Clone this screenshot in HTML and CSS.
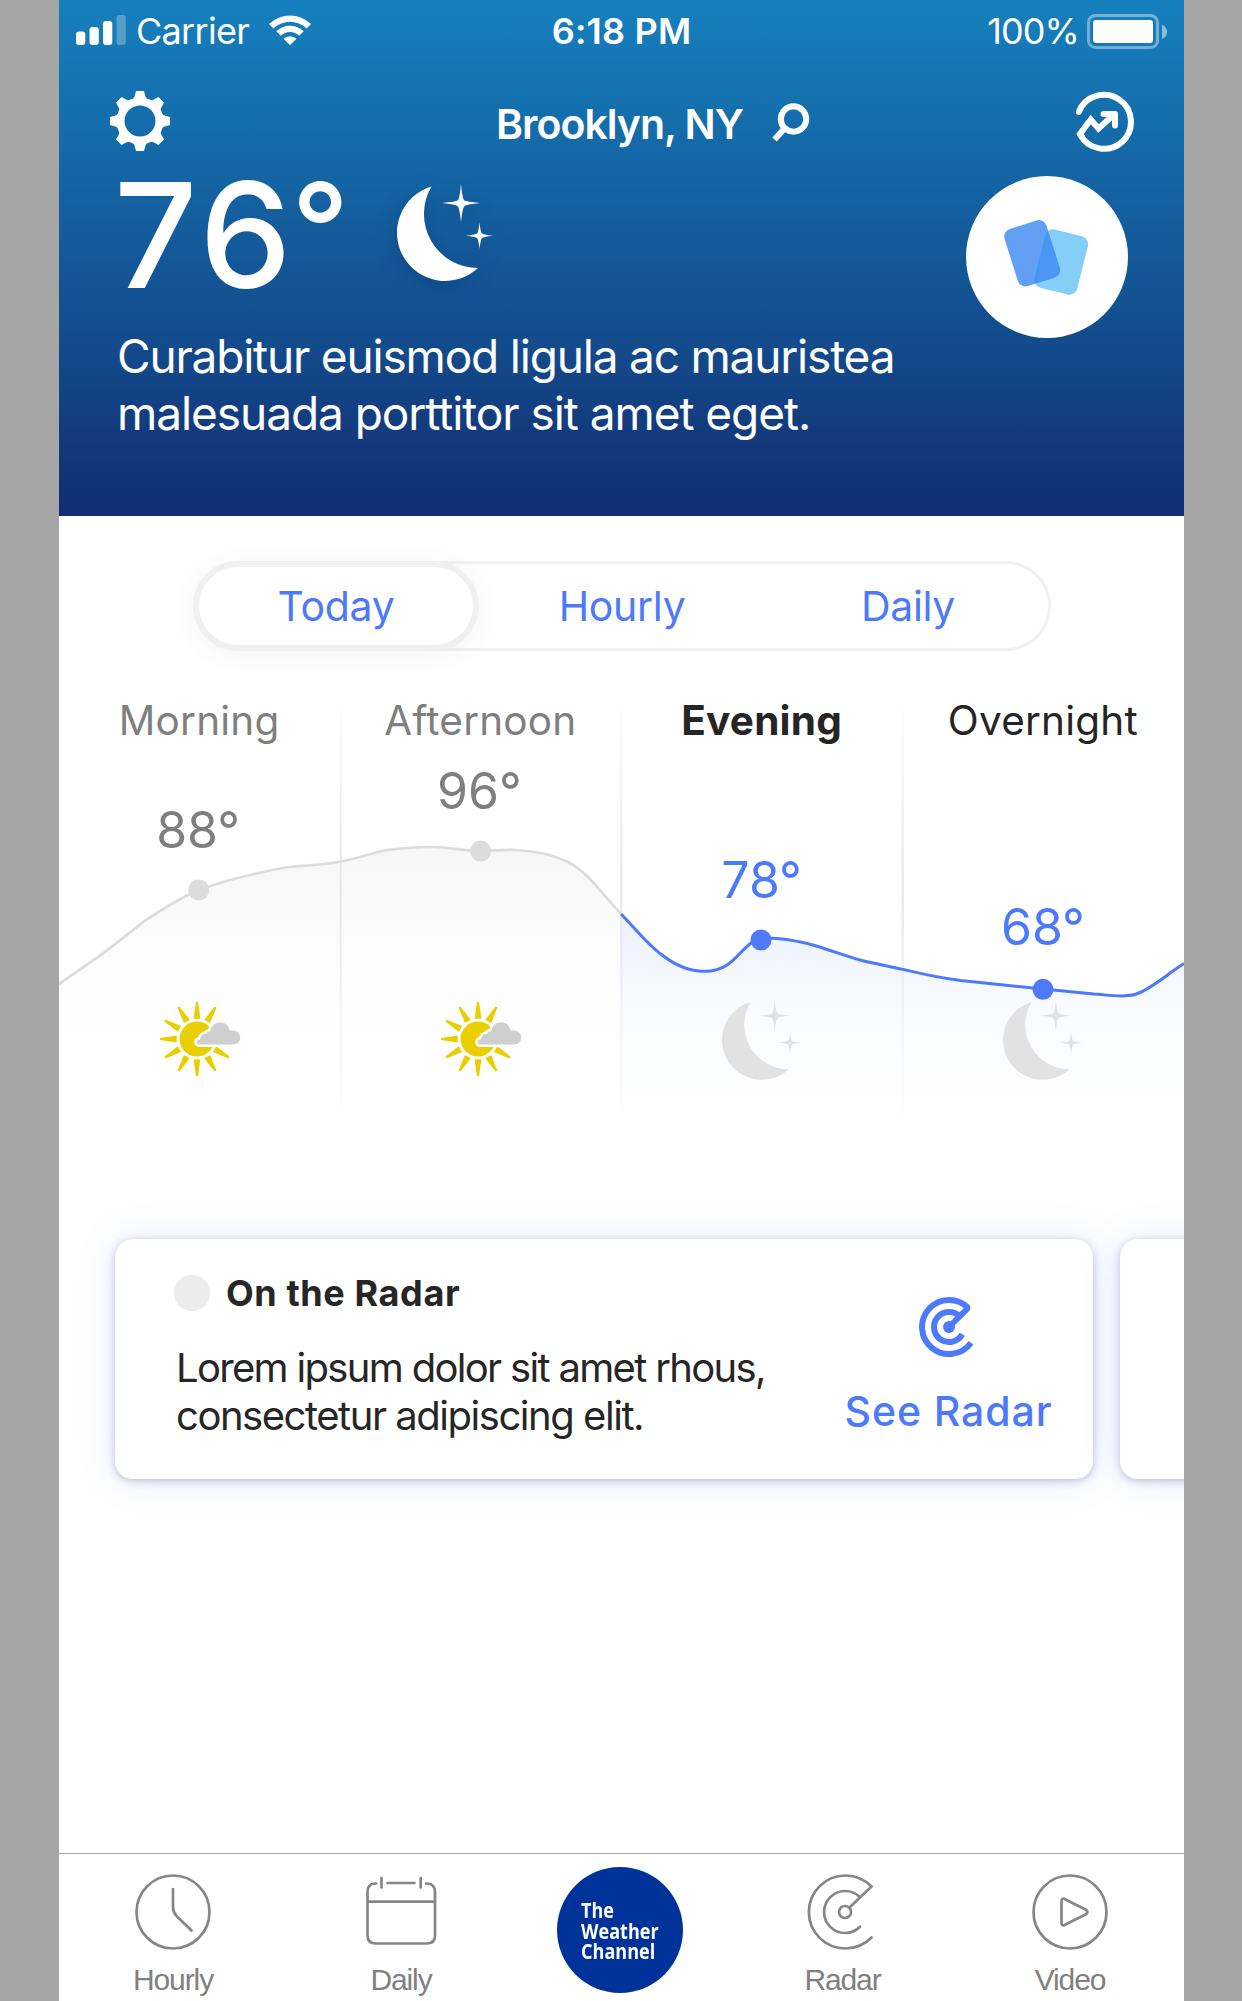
FILE: index.html
```html
<!DOCTYPE html>
<html lang="en">
<head>
<meta charset="utf-8">
<title>Weather</title>
<link rel="stylesheet" href="styles.css">
</head>
<body>
<svg class="defs" width="0" height="0" aria-hidden="true">
  <defs>
    <symbol id="moon" viewBox="397 183 97 98">
      <path d="M431.5 186.5A48.2 48.2 0 1 0 478 268A54 54 0 0 1 431.5 186.5Z"/>
      <path d="M461 184Q462.500 200 464.500 200.500Q466 201.500 480 203Q466 204.500 464.500 206Q462.500 207.500 461 222Q459.500 207.500 457.500 206Q456 204.500 442 203Q456 201.500 457.500 200.500Q459.500 200 461 184Z"/>
      <path d="M479.500 222.500Q480.700 233 482 233.500Q483 234.500 493 235.800Q483 237 482 238Q480.700 239 479.500 249Q478.300 239 477 238Q476 237 466 235.800Q476 234.500 477 233.500Q478.300 233 479.500 222.500Z"/>
    </symbol>
    <symbol id="sun" viewBox="0 0 82 74">
      <g fill="#e9cf00">
        <circle cx="38" cy="37" r="17.500"/>
        <g id="rays">
          <path id="ray" d="M36.900 0H39.100L41.400 16.700H34.600Z"/>
          <use href="#ray" transform="rotate(30 38 37)"/>
          <use href="#ray" transform="rotate(120 38 37)"/>
          <use href="#ray" transform="rotate(150 38 37)"/>
          <use href="#ray" transform="rotate(180 38 37)"/>
          <use href="#ray" transform="rotate(210 38 37)"/>
          <use href="#ray" transform="rotate(240 38 37)"/>
          <use href="#ray" transform="rotate(270 38 37)"/>
          <use href="#ray" transform="rotate(300 38 37)"/>
          <use href="#ray" transform="rotate(330 38 37)"/>
        </g>
      </g>
      <path d="M40 42.500C36.500 42 37 37.500 41 37.500C41.500 33.500 44 31.500 47 32C47.500 30 49 29.500 51 29.500C54 17.500 68.500 17.500 70.500 28.500C83.500 26 84.500 42.500 74.500 42.500Z" fill="#cfcfcf" stroke="#fff" stroke-width="5" paint-order="stroke"/>
    </symbol>
  </defs>
</svg>

<main class="phone">
  <header class="hero">
    <div class="status">
      <div class="status-left">
        <svg width="51" height="30" viewBox="0 0 51 30" fill="#fff"><rect x="0" y="16.500" width="9.300" height="13.500" rx="3"/><rect x="13.500" y="12" width="9.300" height="18" rx="3"/><rect x="27" y="6" width="9.300" height="24" rx="3"/><rect x="40.500" y="0" width="9.300" height="30" rx="3" opacity=".27"/></svg>
        <span class="carrier">Carrier</span>
        <svg class="wifi" width="42" height="30" viewBox="0 0 42 30" fill="#fff"><path d="M0 9A30 30 0 0 1 42 9L37.500 13.500A23.500 23.500 0 0 0 4.500 13.500Z"/><path d="M7.300 16.300A19.500 19.500 0 0 1 34.700 16.300L30.200 20.800A13 13 0 0 0 11.800 20.800Z"/><path d="M14.500 23.700A9.500 9.500 0 0 1 27.500 23.700L21 30.200Z"/></svg>
      </div>
      <div class="time">6:18 PM</div>
      <div class="status-right">
        <span class="percent">100%</span>
        <svg width="80" height="35" viewBox="0 0 80 35"><rect x="1.500" y="1.500" width="69" height="32" rx="7" fill="none" stroke="#fff" stroke-width="3" opacity=".4"/><rect x="6" y="6" width="60" height="23" rx="3" fill="#fff"/><path d="M75 10.500Q80 13 80 18T75 25Z" fill="#fff" opacity=".5"/></svg>
      </div>
    </div>

    <nav class="topbar">
      <svg class="gear" width="60" height="60" viewBox="-30 -30 60 60">
        <path fill="none" stroke="#fff" stroke-width="8" d="M0-19.500A19.500 19.500 0 1 1 0 19.500A19.500 19.500 0 1 1 0-19.500Z"/>
        <g fill="#fff"><path id="tooth" d="M-4-30H4L5.500-24.500Q6.500-21.500 11-20L0-17L-11-20Q-6.500-21.500-5.500-24.500Z"/><use href="#tooth" transform="rotate(45)"/><use href="#tooth" transform="rotate(90)"/><use href="#tooth" transform="rotate(135)"/><use href="#tooth" transform="rotate(180)"/><use href="#tooth" transform="rotate(225)"/><use href="#tooth" transform="rotate(270)"/><use href="#tooth" transform="rotate(315)"/></g>
      </svg>
      <div class="place">
        <span class="city">Brooklyn, NY</span>
        <svg class="search" width="38" height="40" viewBox="0 0 38 40" fill="none" stroke="#fff" stroke-width="6"><circle cx="21.500" cy="16" r="12.700"/><path d="M12.500 25.500L2.500 36.500"/></svg>
      </div>
      <svg class="trend" width="60" height="62" viewBox="0 0 60 62" fill="none" stroke="#fff" stroke-width="6"><path stroke-linecap="round" d="M4.800 22A27 27 0 1 1 6.200 44.600"/><path d="M8.500 47.500L6 44L16.700 29.500L24.500 38.500L40 24.500"/><path stroke-linecap="round" stroke-linejoin="round" d="M29.500 24H41V35.500"/></svg>
    </nav>

    <div class="current">
      <div class="now">
        <div class="reading">
          <span class="degrees"><span class="tens">7</span>6<span class="ring">°</span></span>
          <svg class="moon-now" width="97" height="98" fill="#fff"><use href="#moon"/></svg>
        </div>
        <p class="summary"><span class="line-a">Curabitur euismod ligula ac mauristea</span><br><span class="line-b">malesuada porttitor sit amet eget.</span></p>
      </div>
      <div class="badge">
        <svg width="86" height="78" viewBox="0 0 86 78"><g transform="rotate(14 57.200 44)"><rect x="35.200" y="14" width="44" height="60" rx="8" fill="#85cef7"/></g><g transform="rotate(-17.500 28.200 35.300)"><rect x="6.200" y="5.300" width="44" height="60" rx="8" fill="#3a88f2" opacity=".8"/></g></svg>
      </div>
    </div>
  </header>

  <div class="segments">
    <div class="segment selected">Today</div>
    <div class="segment">Hourly</div>
    <div class="segment">Daily</div>
  </div>

  <section class="forecast">
    <svg class="curve" width="1125" height="440" viewBox="59 690 1125 440">
      <defs>
        <linearGradient id="past" gradientUnits="userSpaceOnUse" x1="0" y1="845" x2="0" y2="1050"><stop offset="0" stop-color="#f7f7f7"/><stop offset=".5" stop-color="#fcfcfc"/><stop offset="1" stop-color="#fff"/></linearGradient>
        <linearGradient id="next" gradientUnits="userSpaceOnUse" x1="0" y1="914" x2="0" y2="1105"><stop offset="0" stop-color="#ecf1ff"/><stop offset=".45" stop-color="#f8faff"/><stop offset="1" stop-color="#fff"/></linearGradient>
        <linearGradient id="divide" x1="0" y1="0" x2="0" y2="1"><stop offset="0" stop-color="#e9e9e9" stop-opacity="0"/><stop offset=".45" stop-color="#e9e9e9"/><stop offset="1" stop-color="#e9e9e9" stop-opacity="0"/></linearGradient>
      </defs>
      <path fill="url(#past)" d="M59 984L98 957C115 945 130 932 146 920C164 908 180 898 199 890C213 885 228 880 242 877C258 873 274 869 290 867C308 865 325 865 341 861.500C355 859 369 854 383 850.700C400 848 416 847 433 847C450 847 465 851 481 851C493 851 504 849.500 516 850C534 851 552 854 568 862C588 872 603 895 621 914V1120H59Z"/>
      <path fill="url(#next)" d="M621 914C634 927 647 944 662 955C675 965 690 971.500 704.700 971.300C713 971.300 721 969 727 965C735 960 743 949 751 943C758 938.500 768 938 777 938.400C790 939.500 803 942 815.500 945.700C830 950 845 956 860 960C874 963.500 889 966.500 903 969.400C922 974 941 978 960.700 980.500L1043 989L1093.700 994C1104 994.500 1119 997 1128 995.500Q1136 995 1142 991.600C1157 984 1169 973 1184 963.600V1120H621Z"/>
      <g fill="url(#divide)"><rect x="339.500" y="695" width="2.500" height="430"/><rect x="620" y="695" width="2.500" height="430"/><rect x="901.500" y="695" width="2.500" height="430"/></g>
      <path fill="none" stroke="#dcdcdc" stroke-width="2.700" d="M57 985.400L98 957C115 945 130 932 146 920C164 908 180 898 199 890C213 885 228 880 242 877C258 873 274 869 290 867C308 865 325 865 341 861.500C355 859 369 854 383 850.700C400 848 416 847 433 847C450 847 465 851 481 851C493 851 504 849.500 516 850C534 851 552 854 568 862C588 872 603 895 621 914"/>
      <path fill="none" stroke="#4d79fb" stroke-width="3" d="M621 914C634 927 647 944 662 955C675 965 690 971.500 704.700 971.300C713 971.300 721 969 727 965C735 960 743 949 751 943C758 938.500 768 938 777 938.400C790 939.500 803 942 815.500 945.700C830 950 845 956 860 960C874 963.500 889 966.500 903 969.400C922 974 941 978 960.700 980.500L1043 989L1093.700 994C1104 994.500 1119 997 1128 995.500Q1136 995 1142 991.600C1157 984 1169 973 1184 963.600"/>
      <g fill="#dcdcdc"><circle cx="198.700" cy="890" r="10.500"/><circle cx="480.600" cy="851" r="10.500"/></g>
      <g fill="#4d79fb"><circle cx="761" cy="940" r="10.500"/><circle cx="1043" cy="989.300" r="10.500"/></g>
    </svg>
    <div class="period past"><h3>Morning</h3><div class="temp" style="margin-top:54px">88°</div><svg class="sun" width="82" height="74"><use href="#sun"/></svg></div>
    <div class="period past"><h3>Afternoon</h3><div class="temp" style="margin-top:15px">96°</div><svg class="sun" width="82" height="74"><use href="#sun"/></svg></div>
    <div class="period active"><h3>Evening</h3><div class="temp" style="margin-top:104px">78°</div><svg class="moon" width="80" height="81"><use href="#moon"/></svg></div>
    <div class="period"><h3>Overnight</h3><div class="temp" style="margin-top:151px">68°</div><svg class="moon" width="80" height="81"><use href="#moon"/></svg></div>
  </section>

  <section class="cards">
    <article class="card">
      <div class="story">
        <h2><span class="dot"></span>On the Radar</h2>
        <p><span class="line-a">Lorem ipsum dolor sit amet rhous,</span><br><span class="line-b">consectetur adipiscing elit.</span></p>
      </div>
      <div class="action">
        <svg width="60" height="60" viewBox="-30 -30 60 60" fill="none" stroke="#4d79fb" stroke-width="6"><path stroke-linejoin="bevel" d="M22 15.700A27 27 0 1 1 19.100-19.100L0 0"/><path d="M13.200 7.200A15 15 0 1 1 10.600-10.600"/><circle r="6" fill="#4d79fb" stroke="none"/></svg>
        <span>See Radar</span>
      </div>
    </article>
    <article class="card"></article>
  </section>

  <nav class="tabbar">
    <div class="tab t1"><svg width="76" height="76" viewBox="-38 -38 76 76"><circle r="36.500"/><path d="M0-23V-5Q0 0 3.500 4L18.500 18.500"/></svg><span>Hourly</span></div>
    <div class="tab t2"><svg width="76" height="76" viewBox="363 1874 76 76"><path d="M376 1883.500H375Q367.500 1884 367.500 1892V1935.500Q367.500 1943.500 375.500 1943.500H427Q435 1943.500 435 1935.500V1892Q435 1884 427 1883.500H426M387.500 1883H414.500M381.500 1878V1887.500M420.700 1878V1887.500M367.500 1901.700H435"/></svg><span>Daily</span></div>
    <div class="logo"><div class="wordmark">The<br>Weather<br>Channel</div></div>
    <div class="tab t3"><svg width="76" height="76" viewBox="-38 -38 76 76"><circle r="6"/><path d="M26.500 25.500A36.500 36.500 0 1 1 26.500-25.500L4.500-4.500M15 14.800A21 21 0 1 1 15-14.800"/></svg><span>Radar</span></div>
    <div class="tab t4"><svg width="76" height="76" viewBox="-38 -38 76 76"><circle r="36.500"/><path d="M-8.500-10.500V10.500Q-8.500 14.800-4.500 12.500L15.500 2.500Q19.500 0 15.500-2.500L-4.500-12.500Q-8.500-14.800-8.500-10.500Z"/></svg><span>Video</span></div>
  </nav>
</main>
</body>
</html>
```
FILE: styles.css
```css
* { box-sizing: border-box; }
body {
  margin: 0;
  background: #a6a6a6;
  font-family: Inter, "Liberation Sans", sans-serif;
  display: flex;
  padding-left: 59px;
  height: 2001px;
  overflow: hidden;
}
svg { display: block; flex: none; }
.defs { position: absolute; }
h2, h3, p { margin: 0; }
.phone {
  width: 1125px;
  height: 2001px;
  background: #fff;
  display: flex;
  flex-direction: column;
  overflow: hidden;
  white-space: nowrap;
}

/* header */
.hero {
  height: 516px;
  flex: none;
  color: #fff;
  background: linear-gradient(#1680be 0%, #1570ae 20%, #145b9b 46%, #134a8b 68%, #123578 90%, #112e76 100%);
}
.status {
  height: 62px;
  display: grid;
  grid-template-columns: 1fr auto 1fr;
  align-items: center;
  padding: 0 17px;
  font-size: 36px;
}
.status-left, .status-right { display: flex; align-items: center; }
.status-left svg { margin-top: -2px; }
.status-right { justify-content: flex-end; gap: 8px; }
.carrier { margin-left: 9px; letter-spacing: -0.7px; }
.wifi { margin-left: 20px; }
.time { font-weight: 600; letter-spacing: 0.2px; }
.percent { letter-spacing: -0.9px; }
.topbar {
  height: 118px;
  padding: 0 50px 0 51px;
  margin-top: 1px;
  display: grid;
  grid-template-columns: 1fr auto 1fr;
  align-items: center;
}
.gear { margin-top: -2px; }
.trend { justify-self: end; margin-top: -2px; }
.place { display: flex; align-items: center; gap: 29px; margin: 4px 0 0 62px; }
.search { margin-top: -2px; }
.city { font-size: 41px; font-weight: 600; letter-spacing: -1px; }
.current { display: flex; justify-content: space-between; padding: 0 56px 0 57px; }
.reading { display: flex; align-items: center; height: 108px; }
.degrees { width: 281px; margin-left: -2px; font-size: 146px; line-height: 108px; font-weight: 500; }
.tens { letter-spacing: 2px; }
.ring { margin-left: 0; font-size: 126px; line-height: 0; vertical-align: 15px; }
.moon-now { margin: -7px 0 0 2px; filter: drop-shadow(0 6px 10px rgba(10, 50, 110, .35)); }
.summary { margin: 39px 0 0 1px; font-size: 46px; line-height: 57px; }
.summary .line-a { letter-spacing: -1.19px; }
.summary .line-b { letter-spacing: -1.06px; }
.badge {
  width: 162px;
  height: 162px;
  margin-top: -5px;
  border-radius: 50%;
  background: #fff;
  display: flex;
  align-items: center;
  justify-content: center;
}

/* segmented control */
.segments {
  width: 858px;
  height: 90px;
  margin: 45px auto 0 134px;
  display: flex;
  flex: none;
  border-radius: 45px;
  box-shadow: inset 0 0 0 3px #f1f1f1;
  color: #4d79fb;
  font-size: 41px;
  letter-spacing: -0.3px;
}
.segment { width: 286px; display: flex; align-items: center; justify-content: center; }
.selected {
  border: 6px solid #eff1f1;
  border-radius: 45px;
  box-shadow: 0 4px 26px rgba(90, 90, 70, .06);
}

/* day parts */
.forecast {
  position: relative;
  height: 440px;
  margin-top: 39px;
  flex: none;
  display: grid;
  grid-template-columns: repeat(4, 1fr);
}
.curve { position: absolute; left: 0; top: 0; }
.period { position: relative; height: 390px; display: flex; flex-direction: column; align-items: center; color: #252525; }
.period h3 { margin: 1px 1px -1px 0; font-size: 40.500px; line-height: 60px; font-weight: 400; letter-spacing: 0.2px; }
.past { color: #7f7f7f; }
.active h3 { font-weight: 700; }
.temp { margin-right: 1px; color: #4d79fb; font-size: 50px; line-height: 52px; height: 52px; flex: none; }
.past .temp { margin-right: 3px; color: #7f7f7f; }
.moon, .sun { margin-top: auto; fill: #e2e2e2; }
.sun { margin: auto 0 4px 0; }

/* story cards */
.cards {
  display: flex;
  gap: 27px;
  padding: 30px 0 50px 56px;
  margin-top: 79px;
}
.card {
  width: 978px;
  height: 240px;
  flex: none;
  display: flex;
  justify-content: space-between;
  border-radius: 18px;
  background: #fff;
  color: #262626;
  box-shadow: 0 2px 8px rgba(40, 50, 110, .28), 0 0 40px rgba(77, 110, 251, .13);
}
.story { padding: 36px 0 0 59px; }
.story h2 { display: flex; align-items: center; gap: 16px; font-size: 36px; line-height: 36px; font-weight: 700; letter-spacing: 0.6px; }
.dot { width: 36px; height: 36px; border-radius: 50%; background: #ececec; }
.story p { margin: 33px 0 0 2px; font-size: 40px; line-height: 48px; }
.story .line-a { letter-spacing: -1.68px; }
.story .line-b { letter-spacing: -1.46px; }
.action { width: 289px; flex: none; display: flex; flex-direction: column; align-items: center; padding-top: 58px; color: #4d79fb; }
.action span { margin-top: 29px; font-size: 41px; line-height: 50px; font-weight: 500; letter-spacing: 0.9px; }

/* bottom bar */
.tabbar {
  height: 148px;
  margin-top: auto;
  border-top: 1px solid #ababab;
  flex: none;
  display: flex;
  padding-left: 76px;
}
.tab {
  width: 76px;
  flex: none;
  margin-right: 152px;
  padding-top: 20px;
  display: flex;
  flex-direction: column;
  align-items: center;
  color: #808080;
  font: 30px/40px "Liberation Sans", sans-serif;
  letter-spacing: -1.1px;
}
.tab svg { fill: none; stroke: #868686; stroke-width: 2.7px; stroke-linecap: round; }
.tab span { margin-top: 10px; }
.t2 { margin-right: 118px; }
.t3 { margin-right: 149px; }
.t3 span { margin-right: 5px; }
.t4 { margin-right: 0; }
.logo {
  width: 126px;
  height: 126px;
  flex: none;
  margin: 13px 124px 0 0;
  padding: 33px 0 0 24px;
  border-radius: 50%;
  background: #039;
  color: #fff;
  font: 700 21px/20.500px "Open Sans", sans-serif;
}
.wordmark { transform: scaleX(.86); transform-origin: left; }
```
